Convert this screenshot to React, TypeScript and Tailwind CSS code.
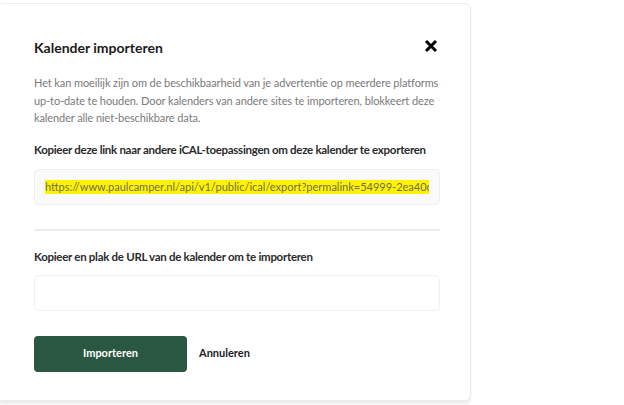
import React from "react";

export default function App() {
  return (
    <div className="w-[624px] h-[405px] bg-white overflow-hidden relative" style={{ fontFamily: "Lato, 'Open Sans', sans-serif" }}>
      <div className="absolute left-[-4px] top-[3px] w-[475px] h-[398px] bg-white rounded-[6px] border border-[#ececec] shadow-[0_3px_3px_rgba(0,0,0,0.08)]">
        <div className="pl-[37px] pr-[32px] pt-[34px] flex flex-col">
          <div className="flex items-center justify-between h-[20px]">
            <h2 className="text-[14px] font-bold text-[#1b1b1b] leading-[20px]">Kalender importeren</h2>
            <svg width="14" height="14" viewBox="0 0 14 14" className="mr-[0px] -mt-[4px]">
              <path d="M2 2 L12 12 M12 2 L2 12" stroke="#000" strokeWidth="3" strokeLinecap="butt" />
            </svg>
          </div>
          <p className="mt-[16px] text-[11px] tracking-[-0.1px] leading-[17.5px] text-[#7a7a7a] w-[410px]">
            Het kan moeilijk zijn om de beschikbaarheid van je advertentie op meerdere platforms up-to-date te houden. Door kalenders van andere sites te importeren, blokkeert deze kalender alle niet-beschikbare data.
          </p>
          <label className="mt-[14px] text-[11.5px] tracking-[-0.29px] leading-[17px] font-bold text-[#2b2b2b] whitespace-nowrap">
            Kopieer deze link naar andere iCAL-toepassingen om deze kalender te exporteren
          </label>
          <div className="mt-[11px] h-[36px] w-[406px] rounded-[5px] border border-[#efefef] bg-[#fafafa] flex items-center pl-[10px] pr-[10px] overflow-hidden">
            <span className="whitespace-nowrap overflow-hidden text-[11px] leading-[14px] text-[#6f6f5a] bg-[#fff200]">
              https://www.paulcamper.nl/api/v1/public/ical/export?permalink=54999-2ea40c
            </span>
          </div>
          <div className="mt-[24px] h-[2px] w-[406px] bg-[#ececec]" />
          <label className="mt-[17px] text-[11.5px] tracking-[-0.29px] leading-[17px] font-bold text-[#2b2b2b] whitespace-nowrap">
            Kopieer en plak de URL van de kalender om te importeren
          </label>
          <div className="mt-[10px] h-[36px] w-[406px] rounded-[5px] border border-[#efefef] bg-white" />
          <div className="mt-[25px] flex items-center gap-[12px]">
            <button className="w-[153px] h-[36px] rounded-[4px] bg-[#2a5741] text-white text-[11px] font-bold">
              Importeren
            </button>
            <span className="text-[11px] font-bold text-[#222]">Annuleren</span>
          </div>
        </div>
      </div>
    </div>
  );
}
